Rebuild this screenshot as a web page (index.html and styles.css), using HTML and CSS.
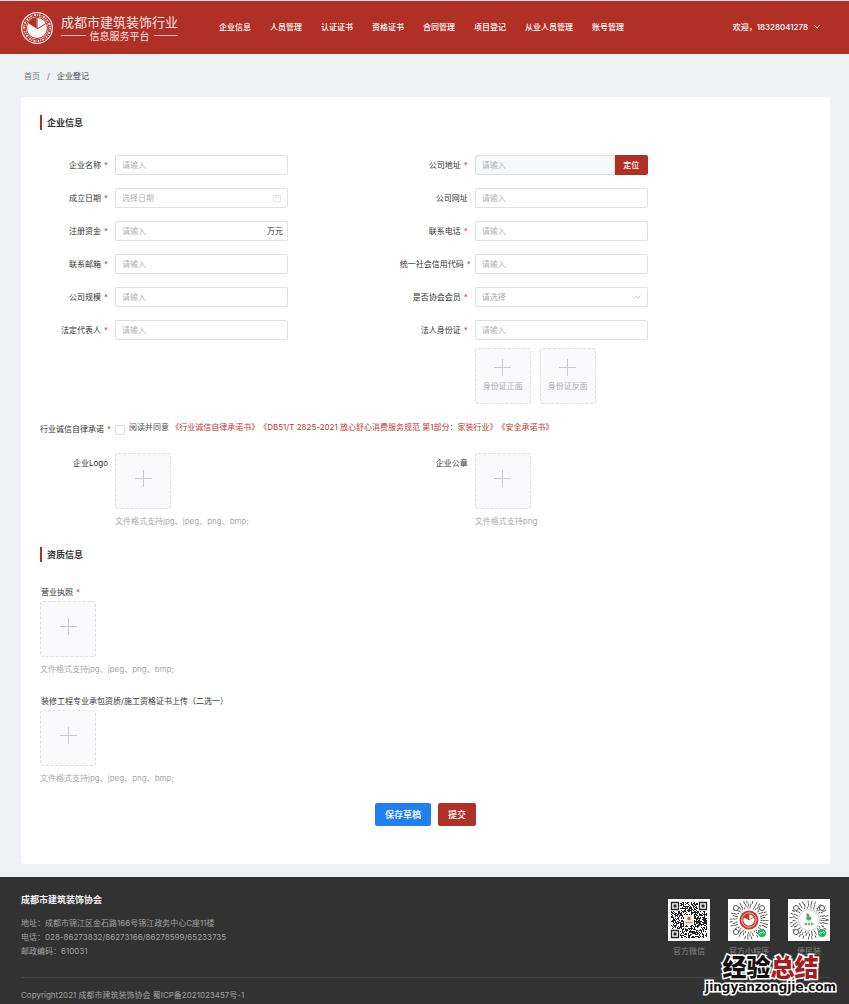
FILE: index.html
```html
<!DOCTYPE html>
<html lang="zh-CN">
  <head>
    <meta charset="UTF-8" />
    <meta name="viewport" content="width=device-width, initial-scale=1.0" />
    <title>企业登记</title>
    <link rel="stylesheet" href="styles.css">
  </head>

  <body>
    <header class="header">
      <a class="logo" href="#">
        <svg class="logo-icon" viewBox="0 0 64 64">
          <circle cx="32" cy="32" r="32" fill="#fbe9e6" />
          <circle cx="32" cy="32" r="26" fill="none" stroke="#b02f26" stroke-width="7" />
          <circle cx="32" cy="32" r="26" fill="none" stroke="#f6d9d5" stroke-width="4" stroke-dasharray="3 2 1 2 4 2 2 2" />
          <circle cx="32" cy="32" r="22" fill="#fff5f3" />
          <circle cx="32" cy="32" r="21" fill="none" stroke="#b02f26" stroke-width="2" />
          <path d="M31 33V12A20 20 0 0 0 14 22z" fill="#b02f26" />
          <path d="M32 34V11M32 34L50 23" stroke="#b02f26" stroke-width="2" fill="none" />
        </svg>
        <span class="logo-text">
          <span class="logo-title">成都市建筑装饰行业</span>
          <span class="logo-sub">信息服务平台</span>
        </span>
      </a>
      <nav class="nav">
        <a href="#">企业信息</a>
        <a href="#">人员管理</a>
        <a href="#">认证证书</a>
        <a href="#">资格证书</a>
        <a href="#">合同管理</a>
        <a href="#">项目登记</a>
        <a href="#">从业人员管理</a>
        <a href="#">账号管理</a>
      </nav>
      <button class="user" type="button">
        欢迎，18328041278
        <svg viewBox="0 0 12 8" width="6" height="4"><path d="M1 1L6 6L11 1" fill="none" stroke="#fff" stroke-width="2" /></svg>
      </button>
    </header>

    <div class="breadcrumb">
      <a href="#">首页</a>
      <span>/</span>
      <span class="current">企业登记</span>
    </div>

    <main class="card">
      <form>
        <h2 class="title">企业信息</h2>
        <div class="grid">
          <div class="item">
            <label class="label must" for="name">企业名称</label>
            <div class="control"><input id="name" type="text" placeholder="请输入" /></div>
          </div>
          <div class="item">
            <label class="label must" for="address">公司地址</label>
            <div class="control">
              <input id="address" class="gray" type="text" placeholder="请输入" />
              <button class="locate" type="button">定位</button>
            </div>
          </div>
          <div class="item">
            <label class="label must" for="date">成立日期</label>
            <div class="control">
              <input id="date" type="text" placeholder="选择日期" />
              <svg class="suffix" viewBox="0 0 16 16" width="8" height="8"><path d="M1 3h14v12H1zM1 6h14M5 1v3M11 1v3" fill="none" stroke="#cdcfd4" stroke-width="1" /></svg>
            </div>
          </div>
          <div class="item">
            <label class="label" for="site">公司网址</label>
            <div class="control"><input id="site" type="text" placeholder="请输入" /></div>
          </div>
          <div class="item">
            <label class="label must" for="capital">注册资金</label>
            <div class="control">
              <input id="capital" type="text" placeholder="请输入" />
              <span class="suffix unit">万元</span>
            </div>
          </div>
          <div class="item">
            <label class="label must" for="phone">联系电话</label>
            <div class="control"><input id="phone" type="text" placeholder="请输入" /></div>
          </div>
          <div class="item">
            <label class="label must" for="email">联系邮箱</label>
            <div class="control"><input id="email" type="text" placeholder="请输入" /></div>
          </div>
          <div class="item">
            <label class="label must" for="code">统一社会信用代码</label>
            <div class="control"><input id="code" type="text" placeholder="请输入" /></div>
          </div>
          <div class="item">
            <label class="label must" for="scale">公司规模</label>
            <div class="control"><input id="scale" type="text" placeholder="请输入" /></div>
          </div>
          <div class="item">
            <label class="label must" for="member">是否协会会员</label>
            <div class="control">
              <select id="member">
                <option value="">请选择</option>
                <option value="1">是</option>
                <option value="0">否</option>
              </select>
              <svg class="suffix" viewBox="0 0 12 8" width="6" height="4"><path d="M1 1L6 6L11 1" fill="none" stroke="#c0c4cc" stroke-width="2" /></svg>
            </div>
          </div>
          <div class="item">
            <label class="label must" for="legal">法定代表人</label>
            <div class="control"><input id="legal" type="text" placeholder="请输入" /></div>
          </div>
          <div class="item">
            <label class="label must" for="idcard">法人身份证</label>
            <div class="control-box">
              <div class="control"><input id="idcard" type="text" placeholder="请输入" /></div>
              <div class="uploads">
                <button class="upload" type="button"><i class="plus"></i>身份证正面</button>
                <button class="upload" type="button"><i class="plus"></i>身份证反面</button>
              </div>
            </div>
          </div>
        </div>

        <div class="item agree">
          <label class="label must" for="agree">行业诚信自律承诺</label>
          <input id="agree" type="checkbox" />
          <p class="agree-text">阅读并同意 <a href="#">《行业诚信自律承诺书》</a><a href="#">《DB51/T 2825-2021 放心舒心消费服务规范 第1部分：家装行业》</a><a href="#">《安全承诺书》</a></p>
        </div>

        <div class="grid">
          <div class="item">
            <label class="label" for="logo">企业Logo</label>
            <div class="control-box">
              <button id="logo" class="upload empty" type="button"><i class="plus"></i></button>
              <p class="tip">文件格式支持jpg、jpeg、png、bmp;</p>
            </div>
          </div>
          <div class="item">
            <label class="label" for="seal">企业公章</label>
            <div class="control-box">
              <button id="seal" class="upload empty" type="button"><i class="plus"></i></button>
              <p class="tip">文件格式支持png</p>
            </div>
          </div>
        </div>

        <h2 class="title second">资质信息</h2>
        <div class="block">
          <label class="block-label must" for="license">营业执照</label>
          <button id="license" class="upload empty" type="button"><i class="plus"></i></button>
          <p class="tip">文件格式支持jpg、jpeg、png、bmp;</p>
        </div>
        <div class="block">
          <label class="block-label" for="cert">装修工程专业承包资质/施工资格证书上传（二选一）</label>
          <button id="cert" class="upload empty" type="button"><i class="plus"></i></button>
          <p class="tip">文件格式支持jpg、jpeg、png、bmp;</p>
        </div>

        <div class="btns">
          <button class="btn blue" type="button">保存草稿</button>
          <button class="btn red" type="submit">提交</button>
        </div>
      </form>
    </main>

    <footer class="footer">
      <div class="footer-top">
        <div class="contact">
          <h3>成都市建筑装饰协会</h3>
          <p>地址：成都市锦江区金石路166号锦江政务中心C座11楼</p>
          <p>电话：028-86273832/86273166/86278599/65233735</p>
          <p>邮政编码：610031</p>
        </div>
        <div class="codes">
          <div class="code">
            <svg class="qr" viewBox="0 0 42 42">
              <rect width="42" height="42" fill="#fff" />
              <path id="modules" fill="#222" />
              <path d="M3.5 3.5h7v7h-7zM31.5 3.5h7v7h-7zM3.5 31.5h7v7h-7z" fill="none" stroke="#222" stroke-width="1.3" />
              <path d="M5.5 5.5h3v3h-3zM33.5 5.5h3v3h-3zM5.5 33.5h3v3h-3z" fill="#222" />
              <rect x="16" y="16" width="10" height="10" rx="1" fill="#fbf1e6" />
              <circle cx="21" cy="19.5" r="1.7" fill="#cf5a45" />
              <path d="M17.5 23.5h7" stroke="#d98a70" stroke-width="1.4" />
            </svg>
            <span>官方微信</span>
          </div>
          <div class="code">
            <svg class="qr" viewBox="0 0 42 42">
              <rect width="42" height="42" fill="#fff" />
              <g class="rays">
                <circle cx="21" cy="21" r="12.5" stroke-width="2" stroke-dasharray=".8 1.5 .8 2.6" />
                <circle cx="21" cy="21" r="15" stroke-width="3" stroke-dasharray=".8 2.2 .8 1.4 .8 3.5" />
                <circle cx="21" cy="21" r="18" stroke-width="3" stroke-dasharray=".8 3.1 .8 2 .8 5" />
              </g>
              <g class="eyes">
                <circle cx="8" cy="9" r="2.5" /><circle cx="34" cy="9" r="2.5" /><circle cx="8" cy="33" r="2.5" />
              </g>
              <circle cx="21" cy="21" r="10.5" fill="#fff" />
              <circle cx="21" cy="21" r="9.5" fill="#c43d34" />
              <circle cx="21" cy="21" r="7.2" fill="none" stroke="#eab5b0" stroke-width="1" />
              <path d="M21 21V15.5A5.5 5.5 0 1 1 16 18.5z" fill="#fff" />
              <path d="M21 21V15.5A5.5 5.5 0 0 0 16 18.5z" fill="#c43d34" />
              <path d="M21 21V15M21 21L26 18" stroke="#c43d34" stroke-width=".7" />
              <circle cx="34" cy="34" r="4" fill="#19b85c" />
              <path d="M32.5 35.5a1 1 0 1 1 1-1.5l1-1a1 1 0 1 1 1 1.5" fill="none" stroke="#fff" stroke-width=".8" />
            </svg>
            <span>官方小程序</span>
          </div>
          <div class="code">
            <svg class="qr" viewBox="0 0 42 42">
              <rect width="42" height="42" fill="#fff" />
              <g class="rays">
                <circle cx="21" cy="21" r="12.5" stroke-width="2" stroke-dasharray=".8 2 .8 3.1" />
                <circle cx="21" cy="21" r="15" stroke-width="3" stroke-dasharray=".8 1.8 .8 2.7 .8 3" />
                <circle cx="21" cy="21" r="18" stroke-width="3" stroke-dasharray=".8 2.5 .8 4.5 .8 3" />
              </g>
              <g class="eyes">
                <circle cx="8" cy="9" r="2.5" /><circle cx="34" cy="9" r="2.5" /><circle cx="8" cy="33" r="2.5" />
              </g>
              <circle cx="21" cy="21" r="10.5" fill="#fff" stroke="#999" stroke-width=".5" />
              <path d="M19 14c2 1 3 2 2.5 4c2-1 2.5 1 1 3.500h-2.500c-3-2-2-3-1-3.500c-1-1-.5-2.500 0-4z" fill="#4caf62" />
              <path d="M16.5 25h9" stroke="#6cbf7d" stroke-width="2.4" stroke-dasharray="2.5 .7" />
              <circle cx="34" cy="34" r="4" fill="#19b85c" />
              <path d="M32.5 35.5a1 1 0 1 1 1-1.5l1-1a1 1 0 1 1 1 1.5" fill="none" stroke="#fff" stroke-width=".8" />
            </svg>
            <span>便民装</span>
          </div>
        </div>
      </div>
      <p class="copyright">Copyright2021 成都市建筑装饰协会 蜀ICP备2021023457号-1</p>
      <div class="watermark">
        <span class="mark-title">经验<em>总结</em></span>
        <span class="mark-url">jingyanzongjie.com</span>
      </div>
    </footer>

    <script src="script.js"></script>
  </body>
</html>
```
FILE: styles.css
```css
* {
  margin: 0;
  padding: 0;
  box-sizing: border-box;
}

body {
  min-height: 100vh;
  display: flex;
  flex-direction: column;
  background-color: #eff1f5;
  color: #333;
  font-family: Inter, "Noto Sans CJK SC", sans-serif;
  font-size: 8px;
  line-height: 14px;
  text-spacing-trim: space-all;
}

a {
  color: inherit;
  text-decoration: none;
}

input,
select,
button {
  font: inherit;
  color: inherit;
}

button {
  border: none;
  cursor: pointer;
}

/* header */
.header {
  height: 54px;
  padding: 0 29px 0 21px;
  display: flex;
  align-items: center;
  background-color: #b02f26;
  border-top: 1px solid #e3dcdc;
  color: #fff;
  font-weight: 500;
}

.logo {
  display: flex;
  align-items: center;
  gap: 8px;
  color: #fbe5e2;
  font-weight: 400;
  white-space: nowrap;
}

.logo-icon {
  width: 32px;
  height: 32px;
}

.logo-text {
  display: flex;
  flex-direction: column;
}

.logo-title {
  font-size: 13px;
  line-height: 16px;
}

.logo-sub {
  display: flex;
  align-items: center;
  gap: 4px;
  font-size: 10px;
  line-height: 12px;
}

.logo-sub::before,
.logo-sub::after {
  content: "";
  flex: 1;
  height: 1px;
  background-color: #f0c5c1;
}

.nav {
  margin-left: 41px;
  padding-bottom: 2px;
  display: flex;
  gap: 19px;
  white-space: nowrap;
}

.user {
  margin-left: auto;
  padding-bottom: 2px;
  display: flex;
  align-items: center;
  gap: 6px;
  background: none;
  white-space: nowrap;
}

.breadcrumb {
  height: 43px;
  padding: 0 24px;
  display: flex;
  align-items: center;
  gap: 7px;
  color: #777;
}

.breadcrumb .current {
  color: #444;
}

/* form */
.card {
  margin: 0 19px 13px 21px;
  padding: 18px 19px 38px;
  background-color: #fff;
  border-radius: 3px;
}

.title {
  margin-bottom: 25px;
  padding-left: 5px;
  border-left: 2px solid #b02f26;
  font-size: 9px;
  line-height: 15px;
  font-weight: 600;
}

.title.second {
  margin: 18px 0 22px;
}

.grid {
  display: grid;
  grid-template-columns: 7fr 8fr;
  row-gap: 13px;
}

.item {
  display: flex;
  align-items: flex-start;
}

.label {
  width: 75px;
  padding-right: 7px;
  flex-shrink: 0;
  line-height: 20px;
  text-align: right;
  white-space: nowrap;
}

.must::after {
  content: "*";
  margin-left: 3px;
  color: #e04545;
}

.control {
  width: 173px;
  position: relative;
  display: flex;
}

.control input,
.control select {
  width: 100%;
  min-width: 0;
  height: 20px;
  padding: 0 6px;
  border: 1px solid #e0e1e5;
  border-radius: 2px;
  background-color: #fff;
  outline: none;
}

.control select {
  appearance: none;
  color: #a8abb2;
}

.control input::placeholder {
  color: #b0b2b8;
}

.control .gray {
  background-color: #f7f8fb;
  border-radius: 2px 0 0 2px;
}

.locate {
  width: 33px;
  height: 20px;
  flex-shrink: 0;
  background-color: #b02f26;
  border-radius: 0 2px 2px 0;
  color: #fff;
  font-weight: 500;
}

/* sits over the right end of the input */
.suffix {
  position: absolute;
  right: 7px;
  top: 50%;
  transform: translateY(-50%);
  pointer-events: none;
}

.unit {
  right: 5px;
}

.uploads {
  margin-top: 8px;
  display: flex;
  gap: 9px;
}

.upload {
  width: 56px;
  height: 56px;
  display: flex;
  flex-direction: column;
  align-items: center;
  justify-content: center;
  gap: 3px;
  background-color: #fafafc;
  border: 1px dashed #dfe0e5;
  border-radius: 3px;
  color: #a8abb2;
  white-space: nowrap;
}

.upload.empty {
  padding-bottom: 5px;
}

.plus {
  width: 17px;
  height: 17px;
  background: linear-gradient(#c8cad0, #c8cad0) center / 1px 100% no-repeat,
    linear-gradient(#c8cad0, #c8cad0) center / 100% 1px no-repeat;
}

.tip {
  margin-top: 4px;
  line-height: 16px;
  color: #a8abb2;
}

.agree {
  margin: 15px 0 14px;
}

.agree input {
  width: 10px;
  height: 10px;
  margin-top: 6px;
  flex-shrink: 0;
  appearance: none;
  border: 1px solid #dcdfe6;
  border-radius: 1px;
}

.agree-text {
  margin-left: 4px;
  line-height: 16px;
  color: #555;
}

.agree-text a {
  color: #c0392f;
}

.block {
  margin-bottom: 16px;
}

.block-label {
  display: block;
  padding-left: 1px;
  margin-bottom: 1px;
  line-height: 16px;
}

.btns {
  margin-top: 17px;
  display: flex;
  justify-content: center;
  gap: 7px;
}

.btn {
  height: 23px;
  padding: 0 10px;
  border-radius: 2px;
  color: #fff;
  font-size: 9px;
  font-weight: 500;
}

.blue {
  background-color: #2080f0;
}

.red {
  background-color: #b02f26;
}

/* footer */
.footer {
  flex: 1;
  padding: 16px 19px 0 21px;
  position: relative;
  background-color: #323232;
  color: #a3a3a3;
}

.footer-top {
  padding-bottom: 19px;
  display: flex;
  justify-content: space-between;
  border-bottom: 1px solid #464646;
}

.contact h3 {
  margin-bottom: 9px;
  color: #f2f2f2;
  font-size: 9px;
  font-weight: 600;
}

.codes {
  padding-top: 6px;
  display: flex;
  gap: 18px;
}

.code {
  width: 42px;
  display: flex;
  flex-direction: column;
  align-items: center;
  gap: 3px;
  color: #858585;
  white-space: nowrap;
}

.qr {
  width: 42px;
  height: 42px;
}

.rays circle {
  fill: none;
  stroke: #444;
}

.eyes circle {
  fill: #fff;
  stroke: #555;
  stroke-width: 1;
}

.copyright {
  margin-top: 9px;
  line-height: 16px;
}

.watermark {
  position: absolute;
  right: 13px;
  bottom: 10px;
  display: flex;
  flex-direction: column;
  align-items: center;
  color: #111;
  font-weight: 900;
  paint-order: stroke fill;
  -webkit-text-stroke: 3px #fff;
}

.mark-title {
  font-size: 24px;
  line-height: 24px;
}

.mark-title em {
  color: #a51d22;
  font-style: normal;
}

.mark-url {
  font-family: "DejaVu Sans", sans-serif;
  font-weight: 700;
  font-size: 12px;
  line-height: 14px;
}
```
FILE: script.js
```js
// fill the qr modules, leaving room for the three corner marks
let size = 36;
let seed = 7;
let d = "";
for (let y = 0; y < size; y++) {
  for (let x = 0; x < size; x++) {
    seed = (seed * 16807) % 2147483647;
    let corner = (x < 9 && y < 9) || (x > 26 && y < 9) || (x < 9 && y > 26);
    if (!corner && seed % 100 < 52) {
      d += "M" + (x + 3) + " " + (y + 3) + "h1v1h-1z";
    }
  }
}
document.querySelector("#modules").setAttribute("d", d);
```
